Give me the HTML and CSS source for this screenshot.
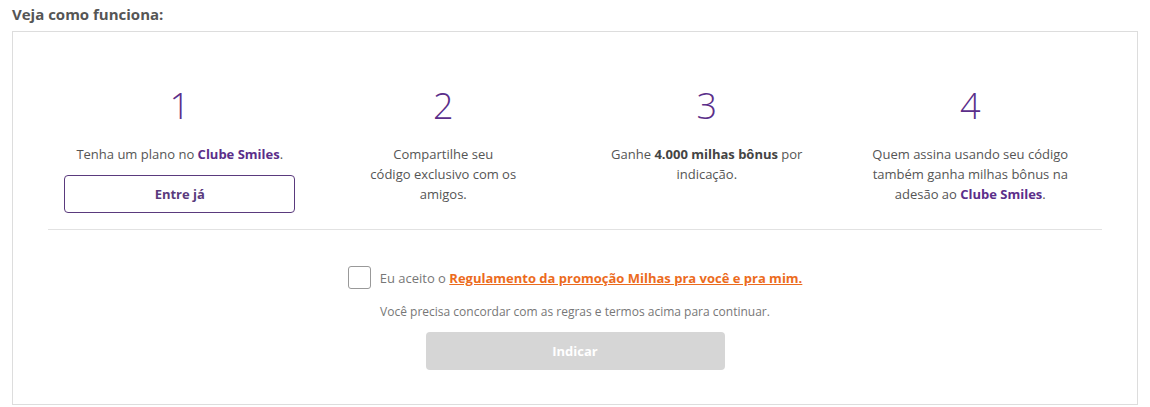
FILE: index.html
```html
<!DOCTYPE html>
<html lang="pt-BR">
<head>
  <meta charset="UTF-8">
  <title>Veja como funciona</title>
  <link rel="stylesheet" href="styles.css">
</head>
<body>
  <h2 class="title">Veja como funciona:</h2>

  <div class="box">
    <div class="steps">
      <div class="step">
        <div class="num">1</div>
        <p class="text">Tenha um plano no <strong class="brand">Clube Smiles</strong>.</p>
        <a class="btn-outline" href="#">Entre já</a>
      </div>
      <div class="step">
        <div class="num">2</div>
        <p class="text">Compartilhe seu<br>código exclusivo com os<br>amigos.</p>
      </div>
      <div class="step">
        <div class="num">3</div>
        <p class="text">Ganhe <strong>4.000 milhas bônus</strong> por indicação.</p>
      </div>
      <div class="step">
        <div class="num">4</div>
        <p class="text">Quem assina usando seu código também ganha milhas bônus na adesão ao <strong class="brand">Clube Smiles</strong>.</p>
      </div>
    </div>

    <hr class="divider">

    <div class="accept">
      <label class="check-row">
        <span class="checkbox"></span>
        <span>Eu aceito o <a class="rules" href="#">Regulamento da promoção Milhas pra você e pra mim.</a></span>
      </label>
      <p class="hint">Você precisa concordar com as regras e termos acima para continuar.</p>
      <button class="btn-disabled" disabled>Indicar</button>
    </div>
  </div>
</body>
</html>
```

FILE: styles.css
```css
body {
  margin: 0;
  padding: 0 12px;
  font-family: "Open Sans", "Liberation Sans", sans-serif;
  background: #fff;
  color: #555;
}

.title {
  margin: 0;
  padding-top: 4px;
  height: 27px;
  font-size: 15px;
  font-weight: 700;
  color: #555;
}

.box {
  border: 1px solid #ddd;
  height: 374px;
  box-sizing: border-box;
  padding: 0 35px;
}

.steps {
  display: grid;
  grid-template-columns: repeat(4, 1fr);
  padding-top: 54px;
  height: 197px;
  box-sizing: border-box;
}

.step {
  display: flex;
  flex-direction: column;
  align-items: center;
  text-align: center;
}

.num {
  font-size: 36px;
  font-weight: 300;
  color: #5b2e8a;
  line-height: 40px;
  height: 40px;
}

.text {
  margin: 18px 0 0;
  max-width: 215px;
  font-size: 13px;
  line-height: 20px;
  color: #555;
}

.text strong {
  font-weight: 700;
  color: #444;
}

.text .brand {
  color: #5b2e8a;
}

.btn-outline {
  display: block;
  margin-top: 11px;
  width: 231px;
  height: 38px;
  line-height: 36px;
  box-sizing: border-box;
  border: 1px solid #5a3a7d;
  border-radius: 4px;
  color: #5a3a7d;
  font-size: 13px;
  font-weight: 700;
  text-decoration: none;
}

.divider {
  margin: 0;
  border: 0;
  border-top: 1px solid #e2e2e2;
}

.accept {
  display: flex;
  flex-direction: column;
  align-items: center;
  padding-top: 36px;
}

.check-row {
  display: flex;
  align-items: center;
  gap: 9px;
  font-size: 13px;
  color: #777;
}

.checkbox {
  width: 21px;
  height: 21px;
  border: 1px solid #999;
  border-radius: 3px;
}

.rules {
  color: #ec6b1d;
  font-weight: 700;
  text-decoration: underline;
}

.hint {
  margin: 14px 0 0;
  font-size: 12px;
  color: #777;
  line-height: 18px;
}

.btn-disabled {
  margin-top: 11px;
  width: 299px;
  height: 38px;
  border: 0;
  border-radius: 4px;
  background: #d6d6d6;
  color: #fff;
  font-family: inherit;
  font-size: 13px;
  font-weight: 700;
}
```
